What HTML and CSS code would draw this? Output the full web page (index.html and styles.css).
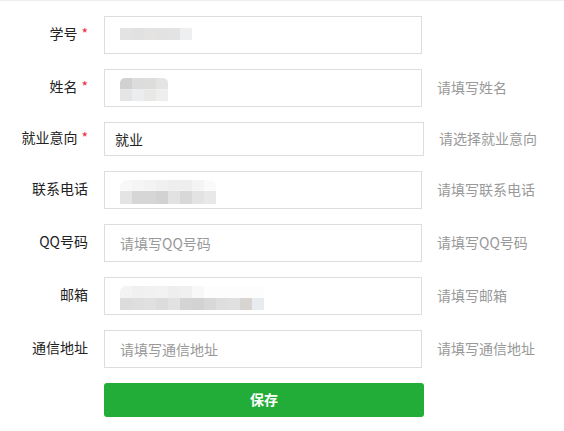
FILE: index.html
```html
<!DOCTYPE html>
<html lang="zh-CN">
<head>
<meta charset="utf-8">
<title>个人信息</title>
<link rel="stylesheet" href="styles.css">
</head>
<body>
<form class="form">
  <div class="row">
    <label class="label">学号<span class="req">*</span></label>
    <div class="field"><span class="blur blur-id"></span></div>
  </div>
  <div class="row">
    <label class="label">姓名<span class="req">*</span></label>
    <div class="field"><span class="blur blur-name"></span></div>
    <span class="hint">请填写姓名</span>
  </div>
  <div class="row">
    <label class="label">就业意向<span class="req">*</span></label>
    <div class="field select">就业</div>
    <span class="hint">请选择就业意向</span>
  </div>
  <div class="row">
    <label class="label">联系电话</label>
    <div class="field"><span class="blur blur-phone"></span></div>
    <span class="hint">请填写联系电话</span>
  </div>
  <div class="row">
    <label class="label">QQ号码</label>
    <input class="field" type="text" placeholder="请填写QQ号码">
    <span class="hint">请填写QQ号码</span>
  </div>
  <div class="row">
    <label class="label">邮箱</label>
    <div class="field"><span class="blur blur-mail"></span></div>
    <span class="hint">请填写邮箱</span>
  </div>
  <div class="row">
    <label class="label">通信地址</label>
    <input class="field" type="text" placeholder="请填写通信地址">
    <span class="hint">请填写通信地址</span>
  </div>
  <div class="row">
    <button class="save" type="button">保存</button>
  </div>
</form>
</body>
</html>
```
FILE: styles.css
```css
* { box-sizing: border-box; }
html, body { margin: 0; padding: 0; background: #fff; }
body {
  font-family: "Noto Sans CJK SC", "Noto Sans", sans-serif;
  font-size: 14px;
  color: #333;
  border-top: 1px solid #eeeeee;
}
.form {
  padding-top: 15px;
  display: flex;
  flex-direction: column;
  gap: 15px;
}
.row {
  display: flex;
  align-items: center;
}
.label {
  width: 88px;
  margin-right: 16px;
  text-align: right;
  line-height: 20px;
  padding-bottom: 4px;
  color: #222;
  white-space: nowrap;
}
.req {
  color: #f0283c;
  margin-left: 4px;
}
.field {
  width: 318px;
  height: 38px;
  border: 1px solid #dddddd;
  background: #fff;
  padding: 0 15px;
  font: inherit;
  color: #333;
  display: flex;
  align-items: center;
  outline: none;
  margin: 0;
}
.field::placeholder { color: #999; }
.select {
  width: 320px;
  height: 34px;
  padding-left: 10px;
  color: #222;
}
.hint {
  margin-left: 15px;
  color: #999;
  padding-bottom: 3px;
}
.save {
  margin-left: 104px;
  width: 320px;
  height: 34px;
  border: none;
  border-radius: 3px;
  background: #22ad38;
  color: #fff;
  font: inherit;
  font-weight: bold;
  padding: 0 0 2px;
}
.blur { display: block; }
.blur-id {
  width: 72px;
  height: 12px;
  margin-top: -3px;
  background: linear-gradient(to right, #e3e3e3 0 12px, #e1e1e1 12px 24px, #e4e3e2 24px 36px, #e2e2e2 36px 48px, #e3e3e3 48px 60px, #eeeff1 60px 72px);
}
.blur-name {
  width: 48px;
  height: 23px;
  margin-top: 3px;
  border-top-left-radius: 5px;
  border-top-right-radius: 5px;
  background:
    linear-gradient(to right, #d2d1d2 0 12px, #dcdcdc 12px 24px, #dddddb 24px 36px, #e4e4e4 36px 48px) top / 100% 50% no-repeat,
    linear-gradient(to right, #e6e5e6 0 12px, #ecedef 12px 24px, #e8e8e6 24px 36px, #eeeeee 36px 48px) bottom / 100% 50% no-repeat;
}
.blur-phone {
  width: 96px;
  height: 24px;
  margin-top: 4px;
  border-top-left-radius: 8px;
  border-top-right-radius: 8px;
  background:
    linear-gradient(to right, #f8f8f8 0 12px, #f5f5f5 12px 24px, #f3f3f3 24px 36px, #f0f0f0 36px 48px, #eeeeee 48px 60px, #eeeeee 60px 72px, #f4f4f4 72px 84px, #fafafa 84px 96px) top / 100% 45% no-repeat,
    linear-gradient(to right, #e4e4e4 0 12px, #d6d6d6 12px 24px, #d6d6d6 24px 36px, #d2d2d2 36px 48px, #e2e2e2 48px 60px, #d8d8d8 60px 72px, #e3e3e3 72px 84px, #e8e8e8 84px 96px) bottom / 100% 55% no-repeat;
}
.blur-mail {
  width: 144px;
  height: 24px;
  margin-top: 3px;
  border-top-left-radius: 6px;
  background:
    linear-gradient(to right, #f3f3f3 0 12px, #f0f0f0 12px 24px, #f1f1f1 24px 36px, #f2f2f2 36px 48px, #eeeeee 48px 60px, #f0f0f0 60px 72px, #f8f8f8 72px 84px, #fdfdfd 84px 144px) top / 100% 50% no-repeat,
    linear-gradient(to right, #dcdcdc 0 12px, #dedede 12px 24px, #e0e0e0 24px 36px, #dcdcdc 36px 48px, #e2e2e2 48px 60px, #d4d4d4 60px 72px, #d2d2d2 72px 84px, #d8d8d8 84px 96px, #dedede 96px 108px, #e0e0e0 108px 120px, #d8d4d0 120px 132px, #e8ecf0 132px 144px) bottom / 100% 50% no-repeat;
}
```
